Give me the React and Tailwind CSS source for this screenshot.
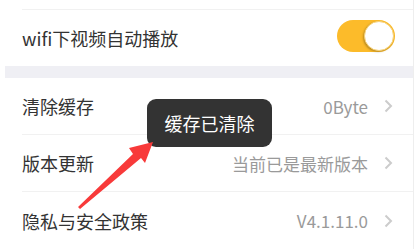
import React from "react";

const font = { fontFamily: '"Noto Sans CJK SC", "Noto Sans", sans-serif' };

function Chevron() {
  return (
    <svg width="9" height="14" viewBox="0 0 9 14" className="shrink-0">
      <path d="M1.5 1.5 L7 7 L1.5 12.5" fill="none" stroke="#cccccc" strokeWidth="2" />
    </svg>
  );
}

function Toggle() {
  return (
    <div className="relative w-[58px] h-[32px] rounded-full bg-[#fcbb2a]">
      <div className="absolute right-[1px] top-[1px] w-[30px] h-[30px] rounded-full bg-white border border-[#f6d27a] shadow-[-1px_1px_2px_rgba(0,0,0,0.25)]" />
    </div>
  );
}

function Row({ label, value, children, last }) {
  return (
    <div className="pl-[17px]">
      <div
        className={`h-[57px] flex items-center justify-between pr-[20px] ${
          last ? "" : "border-b border-[#f1f1f1]"
        }`}
      >
        <span className="text-[18px] text-[#333333] mt-[1px]">{label}</span>
        {children || (
          <div className="flex items-center gap-[16px]">
            <span className="text-[17px] text-[#9a9a9a] mt-[1px]">{value}</span>
            <Chevron />
          </div>
        )}
      </div>
    </div>
  );
}

export default function App() {
  return (
    <div className="relative w-[417px] h-[249px] overflow-hidden bg-white" style={font}>
      <div className="ml-[5px] w-[409px] h-full border-r border-[#eeeeee]">
        {/* end of the previous row */}
        <div className="pl-[17px]">
          <div className="h-[10px] border-b border-[#f1f1f1]" />
        </div>

        {/* wifi autoplay */}
        <div className="pl-[17px]">
          <div className="h-[56px] flex items-center justify-between pr-[18px]">
            <span className="text-[18px] text-[#333333]">wifi下视频自动播放</span>
            <div className="-mt-[5px]">
              <Toggle />
            </div>
          </div>
        </div>

        <div className="h-[12px] bg-[#efeff4]" />

        <Row label="清除缓存" value="0Byte" />
        <Row label="版本更新" value="当前已是最新版本" />
        <Row label="隐私与安全政策" value="V4.1.11.0" last />
      </div>

      {/* toast */}
      <div className="absolute left-[147px] top-[99px] w-[125px] h-[48px] rounded-[9px] bg-[#333333] flex items-center justify-center">
        <span className="text-[18px] text-white">缓存已清除</span>
      </div>

      {/* red annotation arrow */}
      <svg className="absolute left-0 top-0" width="417" height="249" viewBox="0 0 417 249">
        <polygon
          points="78,207 133,154 129,148 153,142 145,163 141,158 80,209"
          fill="#f83a3a"
        />
      </svg>
    </div>
  );
}
